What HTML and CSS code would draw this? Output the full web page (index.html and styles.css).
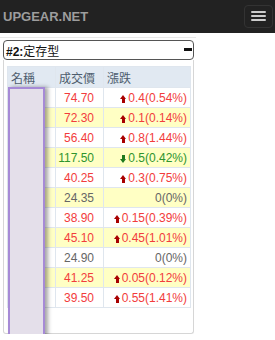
FILE: index.html
```html
<!DOCTYPE html>
<html>
<head>
<meta charset="utf-8">
<link rel="stylesheet" href="styles.css">
</head>
<body>
<nav class="navbar">
  <span class="brand">UPGEAR.NET</span>
  <button class="toggle"><span class="bar"></span><span class="bar"></span><span class="bar"></span></button>
</nav>
<div class="page">
  <div class="heading"><span class="title"><b>#2:</b>定存型</span><span class="collapse"></span></div>
  <div class="card">
    <div class="table-wrap">
      <table class="quotes">
        <thead>
          <tr><th class="c-name">名稱</th><th class="c-price">成交價</th><th class="c-chg">漲跌</th></tr>
        </thead>
        <tbody>
          <tr><td></td><td class="up">74.70</td><td class="up"><i class="arr up-a"></i>0.4(0.54%)</td></tr>
          <tr class="alt"><td></td><td class="up">72.30</td><td class="up"><i class="arr up-a"></i>0.1(0.14%)</td></tr>
          <tr><td></td><td class="up">56.40</td><td class="up"><i class="arr up-a"></i>0.8(1.44%)</td></tr>
          <tr class="alt"><td></td><td class="down">117.50</td><td class="down"><i class="arr down-a"></i>0.5(0.42%)</td></tr>
          <tr><td></td><td class="up">40.25</td><td class="up"><i class="arr up-a"></i>0.3(0.75%)</td></tr>
          <tr class="alt"><td></td><td class="flat">24.35</td><td class="flat">0(0%)</td></tr>
          <tr><td></td><td class="up">38.90</td><td class="up"><i class="arr up-a"></i>0.15(0.39%)</td></tr>
          <tr class="alt"><td></td><td class="up">45.10</td><td class="up"><i class="arr up-a"></i>0.45(1.01%)</td></tr>
          <tr><td></td><td class="flat">24.90</td><td class="flat">0(0%)</td></tr>
          <tr class="alt"><td></td><td class="up">41.25</td><td class="up"><i class="arr up-a"></i>0.05(0.12%)</td></tr>
          <tr><td></td><td class="up">39.50</td><td class="up"><i class="arr up-a"></i>0.55(1.41%)</td></tr>
        </tbody>
      </table>
      <div class="frozen"></div>
    </div>
  </div>
</div>
</body>
</html>
```
FILE: styles.css
```css
* { box-sizing: border-box; }
html, body { margin: 0; padding: 0; background: #fff; }
body { font-family: "Liberation Sans", Arial, "Noto Sans CJK TC", sans-serif; overflow: hidden; }

.navbar {
  height: 33px;
  background: #222;
  display: flex;
  align-items: center;
  justify-content: space-between;
  padding: 0 2px 0 3px;
}
.brand { color: #9d9d9d; font-weight: bold; font-size: 13px; }
.toggle {
  width: 29px; height: 23px;
  margin-top: -1px;
  background: transparent;
  border: 1px solid #333;
  border-radius: 4px;
  padding: 0;
  display: flex; flex-direction: column; align-items: center; justify-content: center; gap: 2px;
}
.toggle .bar { display: block; width: 15px; height: 2px; border-radius: 1px; background: #ccc; }

.page {
  width: 196px;
  margin-top: 4px;
  border-top: 1px solid #e8e8e8;
  padding: 2px 0 0 3px;
}
.heading {
  width: 191px; height: 20px;
  border: 1px solid #555;
  border-radius: 4px;
  display: flex; align-items: center; justify-content: space-between;
  padding: 0 1px 0 2px;
  font-size: 12px; color: #111;
}
.title { font-family: "Liberation Sans", "Noto Sans CJK TC", sans-serif; }
.title b { font-weight: bold; }
.collapse { width: 8px; height: 3px; background: #111; margin-top: -2px; }

.card {
  width: 191px;
  height: 274px;
  border: 1px solid #d6d6d6;
  border-top: none;
  border-radius: 0 0 3px 3px;
  padding: 6px 3px 0 3px;
}
.table-wrap { position: relative; }
.quotes {
  width: 183px;
  border-collapse: collapse;
  font-size: 12px;
  table-layout: fixed;
}
.quotes th, .quotes td { border: 1px solid #dfe6ee; height: 20px; padding: 0; }
.quotes th {
  background: #e1e9f2; color: #4e5d6e; font-weight: normal; text-align: left;
  height: 21px; padding-left: 3px;
  font-family: "Liberation Sans", "Noto Sans CJK TC", sans-serif;
}
.c-name { width: 48px; }
.c-price { width: 48px; }
.c-chg { width: 87px; }
.quotes td:nth-child(2) { text-align: right; padding-right: 9px; }
.quotes td:nth-child(3) { text-align: right; padding-right: 3px; }
.quotes tr.alt td { background: #ffffc4; }
.up { color: #f23c3c; }
.down { color: #2e942e; }
.flat { color: #666; }

.arr { display: inline-block; position: relative; width: 7px; height: 8px; margin-right: 1px; vertical-align: -1px; }
.up-a { background: linear-gradient(#a80000,#a80000) center 3px / 3px 5px no-repeat; }
.up-a::before { content: ""; position: absolute; left: 0; top: 0; border-left: 3.5px solid transparent; border-right: 3.5px solid transparent; border-bottom: 4px solid #a80000; }
.down-a { background: linear-gradient(#1d7a1d,#1d7a1d) center 0 / 3px 5px no-repeat; }
.down-a::before { content: ""; position: absolute; left: 0; bottom: 0; border-left: 3.5px solid transparent; border-right: 3.5px solid transparent; border-top: 4px solid #1d7a1d; }

.frozen {
  position: absolute;
  left: 1px; top: 21px;
  width: 37px; height: 270px;
  background: #e4dfea;
  border: 2px solid #a68ad6;
  box-shadow: 3px 0 4px rgba(0,0,0,0.35);
}
```
